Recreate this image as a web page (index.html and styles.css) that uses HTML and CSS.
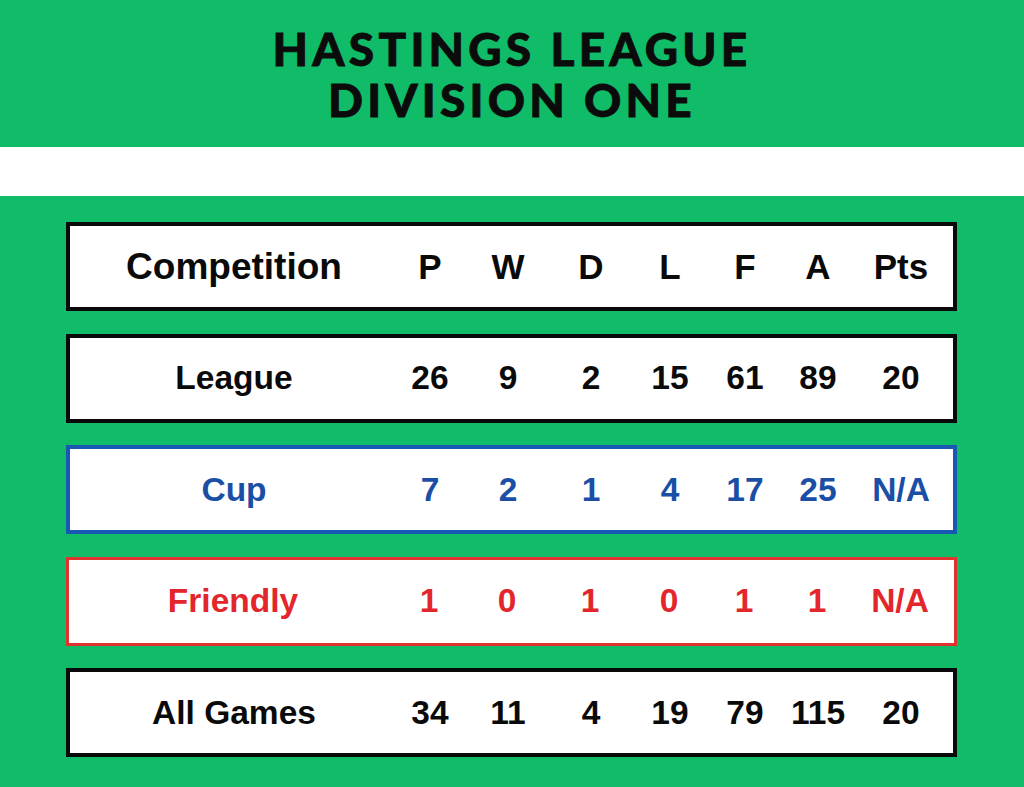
FILE: index.html
```html
<!DOCTYPE html>
<html lang="en">
<head>
<meta charset="utf-8">
<title>Hastings League Division One</title>
<link rel="stylesheet" href="styles.css">
</head>
<body>
<header class="banner">
  <h1 class="title">HASTINGS LEAGUE<br>DIVISION ONE</h1>
</header>
<div class="stripe"></div>
<main class="board">
  <div class="row row-black head">
    <span class="name">Competition</span><span>P</span><span>W</span><span>D</span><span>L</span><span>F</span><span>A</span><span>Pts</span>
  </div>
  <div class="row row-black">
    <span class="name">League</span><span>26</span><span>9</span><span>2</span><span>15</span><span>61</span><span>89</span><span>20</span>
  </div>
  <div class="row row-blue">
    <span class="name">Cup</span><span>7</span><span>2</span><span>1</span><span>4</span><span>17</span><span>25</span><span>N/A</span>
  </div>
  <div class="row row-red">
    <span class="name">Friendly</span><span>1</span><span>0</span><span>1</span><span>0</span><span>1</span><span>1</span><span>N/A</span>
  </div>
  <div class="row row-black">
    <span class="name">All Games</span><span>34</span><span>11</span><span>4</span><span>19</span><span>79</span><span>115</span><span>20</span>
  </div>
</main>
</body>
</html>
```

FILE: styles.css
```css
html, body {
  margin: 0;
  padding: 0;
}
body {
  background: #11bc69;
  width: 1024px;
  height: 787px;
  overflow: hidden;
  font-family: "Liberation Sans", Arial, sans-serif;
}
.banner {
  height: 147px;
  background: #11bc69;
  display: flex;
  align-items: center;
  justify-content: center;
}
.title {
  margin: 0;
  padding-top: 0;
  font-family: Lato, "DejaVu Sans", sans-serif;
  font-weight: 900;
  font-size: 46px;
  line-height: 51px;
  letter-spacing: 4.2px;
  text-align: center;
  color: #0b0b0b;
  -webkit-text-stroke: 0.8px #0b0b0b;
}
.stripe {
  height: 49px;
  background: #ffffff;
}
.board {
  padding: 26px 0 0 66px;
  display: flex;
  flex-direction: column;
  gap: 22.5px;
}
.row {
  box-sizing: border-box;
  width: 891px;
  height: 89px;
  background: #ffffff;
  display: grid;
  grid-template-columns: 328px 64px 92px 74px 84px 66px 80px 86px;
  align-items: center;
  justify-items: center;
  font-weight: 700;
  font-size: 33.5px;
}
.row span {
  white-space: nowrap;
}
.row-black {
  border: 4px solid #0a0a0a;
  color: #0a0a0a;
}
.row-blue {
  border: 4px solid #1857b3;
  color: #1b4fa6;
}
.row-red {
  border: 3px solid #e0322f;
  color: #e3262b;
}
.head {
  font-size: 35px;
}
.head .name {
  font-size: 37px;
}
```
